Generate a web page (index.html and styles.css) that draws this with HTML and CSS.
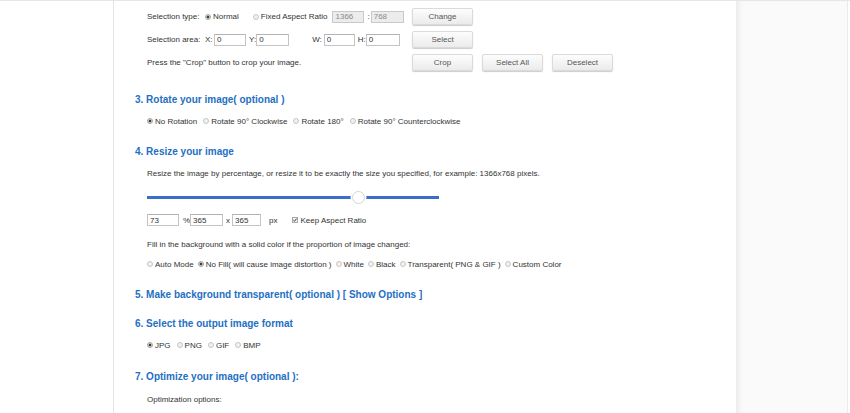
FILE: index.html
```html
<!DOCTYPE html>
<html lang="en">
<head>
<meta charset="utf-8">
<title>Crop, rotate and resize image</title>
<link rel="stylesheet" href="styles.css">
</head>
<body>
<div class="page">
  <div class="gutter"></div>
  <main class="panel">
    <div class="crop">
      <div class="crow">
        <div class="ctl">
          <span class="lbl">Selection type:</span>
          <span class="opt"><i class="radio on"></i>Normal</span>
          <span class="opt fixed"><i class="radio"></i>Fixed Aspect Ratio</span>
          <input class="field dis w32 ml5" value="1366" disabled>
          <span class="colon">:</span>
          <input class="field dis w33" value="768" disabled>
        </div>
        <div class="btns"><button class="btn">Change</button></div>
      </div>
      <div class="crow">
        <div class="ctl">
          <span class="lbl">Selection area:</span>
          <span class="k">X:</span><input class="field w32 ml1" value="0">
          <span class="k ml3">Y:</span><input class="field w33" value="0">
          <span class="k mlw">W:</span><input class="field w31 ml2" value="0">
          <span class="k ml3">H:</span><input class="field w34" value="0">
        </div>
        <div class="btns"><button class="btn">Select</button></div>
      </div>
      <div class="crow">
        <div class="ctl">Press the "Crop" button to crop your image.</div>
        <div class="btns">
          <button class="btn">Crop</button>
          <button class="btn">Select All</button>
          <button class="btn">Deselect</button>
        </div>
      </div>
    </div>

    <section class="sec first">
      <h3>3. Rotate your image( optional )</h3>
      <div class="line">
        <span class="opt"><i class="radio on"></i>No Rotation</span>
        <span class="opt"><i class="radio"></i>Rotate 90° Clockwise</span>
        <span class="opt"><i class="radio"></i>Rotate 180°</span>
        <span class="opt"><i class="radio"></i>Rotate 90° Counterclockwise</span>
      </div>
    </section>

    <section class="sec">
      <h3>4. Resize your image</h3>
      <div class="line">Resize the image by percentage, or resize it to be exactly the size you specified, for example: 1366x768 pixels.</div>
      <div class="slider"><span class="thumb" style="left:72.6%"></span></div>
      <div class="sizes">
        <input class="field w32" value="73">
        <span class="unit pct">%</span>
        <input class="field w33" value="365">
        <span class="unit times">x</span>
        <input class="field w29" value="365">
        <span class="unit px">px</span>
        <span class="check">
          <svg class="cb" width="6" height="6" viewBox="0 0 6 6"><rect x="0.5" y="0.5" width="5" height="5" fill="#f4f4f4" stroke="#a9a9a9"/><path d="M1.4 3.1 L2.5 4.2 L4.7 1.6" fill="none" stroke="#333" stroke-width="1"/></svg>Keep Aspect Ratio
        </span>
      </div>
      <div class="line fill">Fill in the background with a solid color if the proportion of image changed:</div>
      <div class="line tight">
        <span class="opt"><i class="radio"></i>Auto Mode</span>
        <span class="opt"><i class="radio on"></i>No Fill( will cause image distortion )</span>
        <span class="opt"><i class="radio"></i>White</span>
        <span class="opt"><i class="radio"></i>Black</span>
        <span class="opt"><i class="radio"></i>Transparent( PNG &amp; GIF )</span>
        <span class="opt"><i class="radio"></i>Custom Color</span>
      </div>
    </section>

    <section class="sec">
      <h3>5. Make background transparent( optional ) <a class="toggle" href="#">[ Show Options ]</a></h3>
    </section>

    <section class="sec">
      <h3>6. Select the output image format</h3>
      <div class="line">
        <span class="opt"><i class="radio on"></i>JPG</span>
        <span class="opt"><i class="radio"></i>PNG</span>
        <span class="opt"><i class="radio"></i>GIF</span>
        <span class="opt"><i class="radio"></i>BMP</span>
      </div>
    </section>

    <section class="sec last">
      <h3>7. Optimize your image( optional ):</h3>
      <div class="line opt-title">Optimization options:</div>
    </section>
  </main>
  <aside class="side"></aside>
</div>
</body>
</html>
```

FILE: styles.css
```css
* { box-sizing: border-box; }

html, body {
  margin: 0;
  height: 100%;
}

body {
  font-family: "Liberation Sans", Arial, sans-serif;
  font-size: 8px;
  color: #333;
  background: #fff;
  overflow: hidden;
}

.page {
  display: flex;
  height: 413px;
  border-top: 1px solid #e6e6e6;
}

.gutter {
  width: 113px;
  flex: none;
}

.panel {
  width: 623px;
  flex: none;
  border-left: 1px solid #e4e4e4;
  padding-left: 21px;
}

.side {
  width: 112px;
  flex: none;
  background: #fafafa;
  box-shadow: inset 6px 0 6px -4px rgba(0, 0, 0, 0.08);
  border-right: 1px solid #ebebeb;
}

/* crop controls */
.crop {
  padding: 7px 0 0 12px;
  display: flex;
  flex-direction: column;
  gap: 6px;
}

.crow {
  display: flex;
  align-items: center;
  height: 17px;
}

.ctl {
  width: 265px;
  flex: none;
  display: flex;
  align-items: center;
  white-space: nowrap;
}

.lbl {
  width: 58px;
  flex: none;
}

.btns {
  display: flex;
  gap: 9px;
}

.btn {
  width: 61px;
  height: 17px;
  padding: 0;
  font: 8px "Liberation Sans", Arial, sans-serif;
  color: #555;
  border: 1px solid #dadada;
  border-radius: 2px;
  background: linear-gradient(#fdfdfd, #ebebeb);
  box-shadow: 0 1px 1px rgba(0, 0, 0, 0.2);
}

.field {
  height: 12px;
  padding: 0 0 0 2px;
  font: 8px "Liberation Sans", Arial, sans-serif;
  color: #333;
  border: 1px solid #c4c4c4;
  border-top-color: #b3b3b3;
  background: #fff;
  border-radius: 0;
  flex: none;
}

.field.dis {
  background: #ececec;
  color: #8a8a8a;
  border-color: #c9c9c9;
}

.w29 { width: 29px; }
.w31 { width: 31px; }
.w32 { width: 32px; }
.w33 { width: 33px; }
.w34 { width: 34px; }
.ml1 { margin-left: 1.5px; }
.ml2 { margin-left: 2px; }
.ml3 { margin-left: 3px; }
.ml5 { margin-left: 5px; }
.mlw { margin-left: 23px; }

.colon {
  margin: 0 1px 0 3px;
}

/* radios */
.opt {
  display: inline-flex;
  align-items: center;
  white-space: nowrap;
}

.opt + .opt {
  margin-left: 6px;
}

.line.tight .opt + .opt {
  margin-left: 4px;
}

.ctl .opt.fixed {
  margin-left: 14px;
}

.radio {
  width: 6px;
  height: 6px;
  flex: none;
  margin-right: 2px;
  border-radius: 50%;
  border: 1px solid #c6c6c6;
  background: #f1f1f1;
}

.radio.on {
  border-color: #a4a4a4;
  background: radial-gradient(circle, #3c3c3c 0 1.2px, #e6e6e6 1.7px);
}

/* sections */
.sec {
  margin-top: 13px;
}

.sec.first {
  margin-top: 21px;
}

.sec.last {
  margin-top: 14px;
}

h3 {
  margin: 0 0 3px;
  font: bold 10px/16px "Liberation Sans", Arial, sans-serif;
  color: #246fc3;
}

.toggle {
  color: #246fc3;
  text-decoration: none;
}

.line {
  height: 20px;
  padding-left: 12px;
  display: flex;
  align-items: center;
  white-space: nowrap;
}

.line.fill {
  margin-top: 8px;
}

.line.opt-title {
  margin-top: 4px;
}

/* slider */
.slider {
  position: relative;
  margin: 7px 0 0 12px;
  width: 292px;
  height: 14px;
  background: linear-gradient(#3a6ec8, #3a6ec8) left center / 100% 3px no-repeat;
}

.thumb {
  position: absolute;
  top: 0.5px;
  width: 13px;
  height: 13px;
  margin-left: -6.5px;
  border-radius: 50%;
  background: #fff;
  border: 1px solid #d4d4d4;
  box-shadow: 0 0 0 1.5px #fff;
}

/* size inputs */
.sizes {
  margin-top: 10px;
  padding-left: 12px;
  height: 12px;
  display: flex;
  align-items: center;
  white-space: nowrap;
}

.unit.pct { margin: 0 0 0 4px; width: 7px; }
.unit.times { margin: 0 2px 0 3px; }
.unit.px { margin-left: 8px; }

.check {
  display: inline-flex;
  align-items: center;
  margin-left: 15px;
}

.cb {
  margin-right: 2px;
  flex: none;
}
```
